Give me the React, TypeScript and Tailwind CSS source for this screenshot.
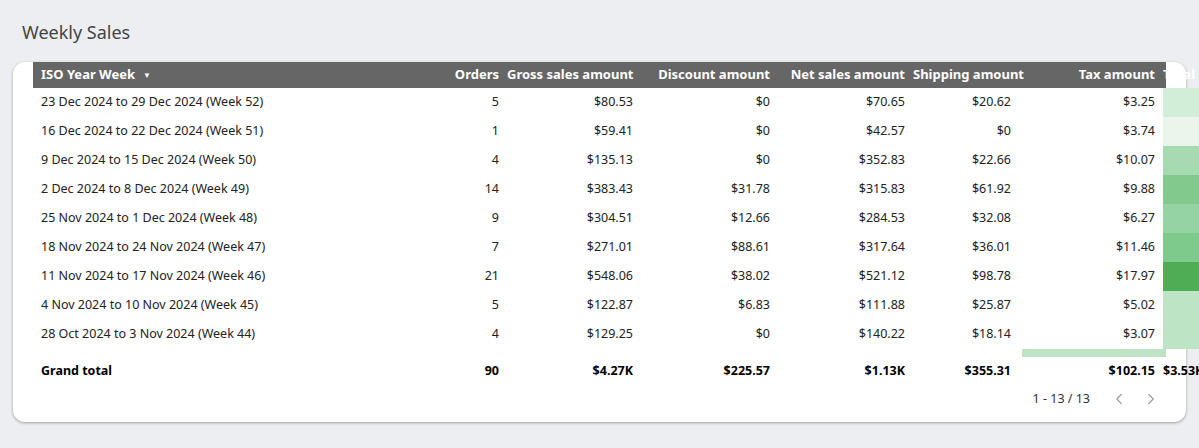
import React from 'react';
import { ChevronLeft, ChevronRight } from 'lucide-react';

const rows = [
  ['23 Dec 2024 to 29 Dec 2024 (Week 52)', '5', '$80.53', '$0', '$70.65', '$20.62', '$3.25', '$102.57', 'bg-[#d3eed8]'],
  ['16 Dec 2024 to 22 Dec 2024 (Week 51)', '1', '$59.41', '$0', '$42.57', '$0', '$3.74', '$40.66', 'bg-[#eaf6ec]'],
  ['9 Dec 2024 to 15 Dec 2024 (Week 50)', '4', '$135.13', '$0', '$352.83', '$22.66', '$10.07', '$261.16', 'bg-[#a6dab0]'],
  ['2 Dec 2024 to 8 Dec 2024 (Week 49)', '14', '$383.43', '$31.78', '$315.83', '$61.92', '$9.88', '$374.63', 'bg-[#80ca8e]'],
  ['25 Nov 2024 to 1 Dec 2024 (Week 48)', '9', '$304.51', '$12.66', '$284.53', '$32.08', '$6.27', '$309.19', 'bg-[#95d4a2]'],
  ['18 Nov 2024 to 24 Nov 2024 (Week 47)', '7', '$271.01', '$88.61', '$317.64', '$36.01', '$11.46', '$405.76', 'bg-[#7ec98c]'],
  ['11 Nov 2024 to 17 Nov 2024 (Week 46)', '21', '$548.06', '$38.02', '$521.12', '$98.78', '$17.97', '$672.34', 'bg-[#4eae55]'],
  ['4 Nov 2024 to 10 Nov 2024 (Week 45)', '5', '$122.87', '$6.83', '$111.88', '$25.87', '$5.02', '$185.33', 'bg-[#bde4c4]'],
  ['28 Oct 2024 to 3 Nov 2024 (Week 44)', '4', '$129.25', '$0', '$140.22', '$18.14', '$3.07', '$186.77', 'bg-[#bde4c4]'],
];

const w = ['w-[323px]', 'w-[151px]', 'w-[134px]', 'w-[137px]', 'w-[135px]', 'w-[106px]', 'w-[144px]'];
const heads = ['Orders', 'Gross sales amount', 'Discount amount', 'Net sales amount', 'Shipping amount', 'Tax amount', 'Total sales amount'];
const totals = ['90', '$4.27K', '$225.57', '$1.13K', '$355.31', '$102.15', '$3.53K'];

export default function App() {
  return (
    <div className="w-[1199px] h-[448px] bg-[#eceef1] pt-[20px] font-['Open_Sans',sans-serif]">
      <h1 className="ml-[22px] h-[42px] text-[18px] leading-[24px] text-[#444] font-['Roboto',sans-serif]">Weekly Sales</h1>
      <div className="mx-[13px] h-[360px] bg-white rounded-[12px] shadow-[0_1px_3px_rgba(0,0,0,0.35)] px-[20px]">
        <div className="flex h-[26px] bg-[#666666] text-white text-[13px] font-bold font-['Roboto',sans-serif] items-center whitespace-nowrap">
          <div className={`${w[0]} shrink-0 pl-[8px] flex items-center gap-[8px]`}>ISO Year Week <span className="text-[8px]">▼</span></div>
          {heads.map((h, i) => <div key={h} className={`${w[i + 1]} shrink-0 text-right pr-[8px]`}>{h}</div>)}
        </div>
        {rows.map(r => (
          <div key={r[0]} className="flex h-[29px] text-[12.5px] text-[#222] whitespace-nowrap">
            <div className={`${w[0]} shrink-0 pl-[8px] flex items-center`}>{r[0]}</div>
            {r.slice(1, 7).map((c, i) => <div key={i} className={`${w[i + 1]} shrink-0 pr-[8px] flex items-center justify-end`}>{c}</div>)}
            <div className={`${w[6]} shrink-0 pr-[8px] flex items-center justify-end ${r[8]}`}>{r[7]}</div>
          </div>
        ))}
        <div className="flex h-[8px] justify-end">
          <div className="w-[144px] bg-[#bde4c4]" />
        </div>
        <div className="flex h-[29px] text-[12.5px] font-bold text-black items-center whitespace-nowrap">
          <div className={`${w[0]} shrink-0 pl-[8px]`}>Grand total</div>
          {totals.map((t, i) => <div key={i} className={`${w[i + 1]} shrink-0 text-right pr-[8px]`}>{t}</div>)}
        </div>
        <div className="flex justify-end items-center h-[26px] text-[12.5px] text-[#333] gap-[14px] pr-[6px]">
          <span className="mr-[6px]">1 - 13 / 13</span>
          <ChevronLeft className="w-[18px] h-[18px] text-[#999]" strokeWidth={1.5} />
          <ChevronRight className="w-[18px] h-[18px] text-[#999]" strokeWidth={1.5} />
        </div>
      </div>
    </div>
  );
}
